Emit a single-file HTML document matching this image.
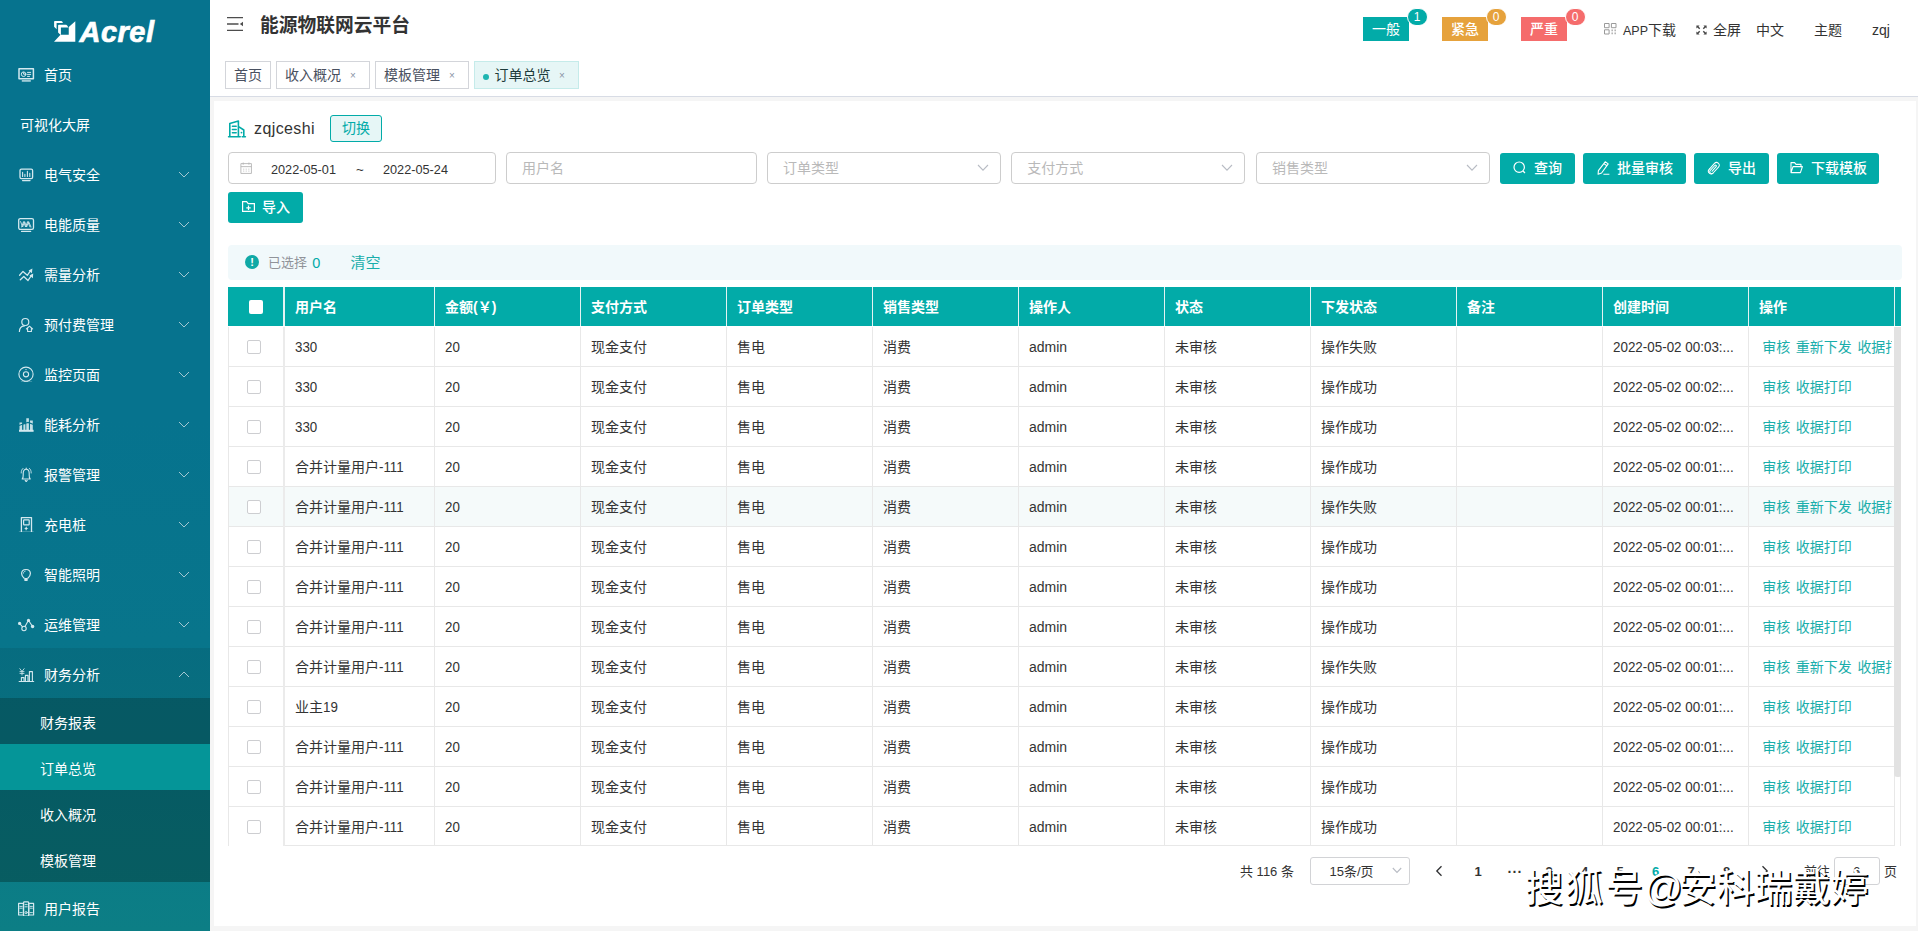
<!DOCTYPE html>
<html lang="zh-CN">
<head>
<meta charset="utf-8">
<title>能源物联网云平台</title>
<style>
*{box-sizing:border-box;margin:0;padding:0}
html,body{width:1918px;height:931px;overflow:hidden}
body{background:#f5f5f5;font-family:"Liberation Sans","Noto Sans CJK SC",sans-serif;font-size:14px;color:#333;position:relative}
i{font-style:normal}
a{text-decoration:none}
.abs{position:absolute}
/* ---------- sidebar ---------- */
#side{position:absolute;left:0;top:0;width:210px;height:931px;overflow:hidden;
 background:linear-gradient(to bottom,#06738e 0,#06738e 45%,#08758b 69%,#0c7e85 100%);color:#fff}
#side .m{position:absolute;left:0;width:210px;height:50px;line-height:50px;font-size:14px;color:#fff;white-space:nowrap}
#side .m span{position:absolute;left:44px;top:2px}
#side .m svg.ic{position:absolute;left:17px;top:16px;width:18px;height:18px}
#side .m svg.ar{position:absolute;left:178px;top:23px;width:12px;height:7px}
#side .s{position:absolute;left:0;width:210px;height:46px;line-height:46px;font-size:14px;color:#fff}
#side .s span{position:absolute;left:40px;top:2px}
#side .sub{position:absolute;left:0;top:698px;width:210px;height:184px;background:rgba(0,21,14,.3)}
#side .open{background:rgba(0,0,0,.075)}
#side .act{background:#059598}
#logo{position:absolute;left:0;top:0;width:210px;height:50px}
#logo em{position:absolute;left:79.500px;top:11.500px;font:italic bold 29px/40px "Liberation Sans",sans-serif;color:#fff;-webkit-text-stroke:.7px #fff;letter-spacing:.500px}
/* ---------- header ---------- */
#head{position:absolute;left:210px;top:0;width:1708px;height:97px;background:#fff;border-bottom:1px solid #d8dce5}
#title{position:absolute;left:50px;top:11px;font-size:18.75px;font-weight:bold;line-height:30px;color:#333;white-space:nowrap}
.tab{position:absolute;top:61px;height:28px;border:1px solid #d3d5da;background:#fff;font-size:14px;line-height:26px;color:#495060;white-space:nowrap}
.tab span{position:absolute;top:0}
.tab .x{font-size:10px;color:#8a93a5;top:.5px}
.tab.on{background:#e6f6f6;border-color:#c5ebea;color:#1d3b3b}
.tag{position:absolute;top:17px;height:24px;width:46px;color:#fff;font-size:14px;line-height:24px;text-align:center;font-weight:400}
.bdg{position:absolute;top:7.500px;width:21px;height:18.500px;border-radius:10px;border:1px solid #fff;color:#fff;font-size:12px;line-height:16px;text-align:center}
.hr{position:absolute;top:19px;line-height:22px;font-size:14px;color:#333;white-space:nowrap}
/* ---------- content ---------- */
#card{position:absolute;left:214px;top:100.5px;width:1701.5px;height:825px;background:#fff}
.inp{position:absolute;top:152px;height:32px;border:1px solid #cdcdcd;border-radius:4px;background:#fff;font-size:14px;line-height:30px;color:#b9b9b9;white-space:nowrap}
.inp span{position:absolute;left:15px;top:0}
.inp svg.dn{position:absolute;right:11px;top:11px;width:12px;height:8px}
.btn{position:absolute;top:153px;height:31px;border-radius:3px;background:#02aba8;color:#fff;font-size:14px;line-height:31px;font-weight:500;white-space:nowrap}
.btn span{position:absolute;top:0}
.btn svg{position:absolute;top:8px;width:13px;height:13px}
#alert{position:absolute;left:228px;top:245px;width:1674px;height:35px;background:#f1f9fb;border-radius:4px;font-size:13px;line-height:35px;color:#909399}
/* table */
#th{position:absolute;left:228px;top:286.700px;width:1673px;height:39.200px;background:#02aba8;color:#fff;font-weight:bold;font-size:14px;line-height:39px}
#th span{position:absolute;top:1px;white-space:nowrap}
#th u{position:absolute;top:0;width:1px;height:39px;background:#e4f3f3;text-decoration:none}
#tb{position:absolute;left:228px;top:326.700px;width:1673px;height:519.400px;background:#fff;overflow:hidden}
#tb .r{position:absolute;left:0;width:1666px;height:40px;border-bottom:1px solid #e8e8e8;line-height:39px;font-size:14px;color:#333}
#tb .r.hv{background:#f5fafa}
#tb .c{position:absolute;top:1px;height:38px;white-space:nowrap;overflow:hidden}
#tb .c i{display:inline-block;font-size:14.200px;transform:scaleX(.94);transform-origin:0 50%}
#tb .ck{position:absolute;left:19.200px;top:13.500px;width:13.800px;height:13.800px;border:1px solid #cdced1;border-radius:2px;background:#fff}
#tb .v{position:absolute;top:0;width:1px;height:520px;background:#e8e8e8}
.c1{left:67px;width:135px}.c2{left:217px}.c3{left:363px}.c4{left:509px}.c5{left:655px}.c6{left:801px}.c7{left:947px}.c8{left:1093px}
.c10{left:1385px;width:126px}
#tb .c10 i{transform:scaleX(.945)}
.c11{left:1531.400px;width:132.600px;color:#1aaeab}
.c11 a{display:inline-block;padding:0 2.800px;color:#1aaeab}
/* pagination */
.pg{position:absolute;top:858px;line-height:28px;font-size:13px;color:#333;white-space:nowrap}
.pg.b{font-weight:bold}
/* watermark */
#wm{position:absolute;left:1525px;top:860px;font-size:38px;line-height:56px;color:#fff;white-space:nowrap;text-shadow:1.5px 1.5px 0 #000;letter-spacing:0}
</style>
</head>
<body>
<div id="side">
<div id="logo"><svg class="abs" style="left:53px;top:20px" width="24" height="23" viewBox="53 20 24 23"><path d="M54.100 21.700Q54.100 20.900 54.900 20.900H61.400Q62.700 21.300 62.900 23H56.600V29.300L54.100 26.700z M58.100 25.500Q58.100 24.700 58.900 24.700H66.200Q67.600 25.200 68.300 27.500H60.900V35.300L58.100 32.500z M75.300 21.250V41.700H54L60.500 34.700H68.750V27z" fill="#fff"/></svg><em>Acrel</em></div>
<div class="m" style="top:48px"><svg class="ic" viewBox="0 0 18 18"><rect x="2" y="4.8" width="14.4" height="10" fill="none" stroke="#d4e9ef" stroke-width="1.5" stroke-linecap="round" stroke-linejoin="round" stroke-linejoin="miter"/><rect x="4.8" y="16" width="9" height="1.8" fill="#d4e9ef" opacity=".75"/><circle cx="6.6" cy="10.2" r="2.3" fill="none" stroke="#d4e9ef" stroke-width="1" stroke-linecap="round" stroke-linejoin="round"/><path d="M6.6 8.6v1.6h1.6M10.5 8.4h3.2M10.5 10.4h3.2M10.5 12.4h2" fill="none" stroke="#d4e9ef" stroke-width="1" stroke-linecap="round" stroke-linejoin="round"/></svg><span>首页</span></div>
<div class="m" style="top:98px"><span style="left:20px">可视化大屏</span></div>
<div class="m" style="top:148px"><svg class="ic" viewBox="0 0 18 18"><rect x="3" y="5.2" width="12.6" height="9.4" rx="1.4" fill="none" stroke="#d4e9ef" stroke-width="1.3" stroke-linecap="round" stroke-linejoin="round"/><path d="M5.6 12.4v-4M7.9 12.4v-2.2M10.4 12.4v-5M12.8 12.4v-3.2" fill="none" stroke="#d4e9ef" stroke-width="1.1" stroke-linecap="round" stroke-linejoin="round"/><path d="M5.5 16.6h7.6" fill="none" stroke="#d4e9ef" stroke-width="1.1" stroke-linecap="round" stroke-linejoin="round"/></svg><span>电气安全</span><svg class="ar" viewBox="0 0 12 7"><path d="M1 1L6 6L11 1" fill="none" stroke="#a3c8d3" stroke-width="1"/></svg></div>
<div class="m" style="top:198px"><svg class="ic" viewBox="0 0 18 18"><rect x="1.7" y="4.6" width="14.8" height="10.8" rx="1.6" fill="none" stroke="#d4e9ef" stroke-width="1.3" stroke-linecap="round" stroke-linejoin="round"/><path d="M3.6 7.6 L5.6 13 L7.6 7.6 L9.6 13 L11.6 7.6 L14 13 M4.6 13 L6.6 7.6 L8.6 13 L10.6 7.6 L13 13" fill="none" stroke="#d4e9ef" stroke-width="0.9" stroke-linecap="round" stroke-linejoin="round"/><path d="M4.5 17.4h9.2" fill="none" stroke="#d4e9ef" stroke-width="1.1" stroke-linecap="round" stroke-linejoin="round"/></svg><span>电能质量</span><svg class="ar" viewBox="0 0 12 7"><path d="M1 1L6 6L11 1" fill="none" stroke="#a3c8d3" stroke-width="1"/></svg></div>
<div class="m" style="top:248px"><svg class="ic" viewBox="0 0 18 18"><path d="M2.6 11.2 L6 7.4 L10.3 11.3 L13.6 6.6 M3.3 15.7 L6.8 12.5 L11 16.5 L14.5 11.4" fill="none" stroke="#d4e9ef" stroke-width="1.3" stroke-linecap="round" stroke-linejoin="round"/><path d="M15.4 4.6 L14.9 9.2 L11.6 6.4Z M16.2 9.6 L15.9 14.2 L12.5 11.4Z" fill="#d4e9ef"/></svg><span>需量分析</span><svg class="ar" viewBox="0 0 12 7"><path d="M1 1L6 6L11 1" fill="none" stroke="#a3c8d3" stroke-width="1"/></svg></div>
<div class="m" style="top:298px"><svg class="ic" viewBox="0 0 18 18"><circle cx="8.3" cy="8" r="3.5" fill="none" stroke="#d4e9ef" stroke-width="1.2" stroke-linecap="round" stroke-linejoin="round"/><path d="M2.4 17.8 C2.4 14.6 4.4 12.2 7.4 11.9" fill="none" stroke="#d4e9ef" stroke-width="1.2" stroke-linecap="round" stroke-linejoin="round"/><path d="M9.4 15 L12.5 12.2 L15.6 15 M10.6 14.6 V17.6 H14.4 V14.6" fill="none" stroke="#d4e9ef" stroke-width="1.1" stroke-linecap="round" stroke-linejoin="round"/></svg><span>预付费管理</span><svg class="ar" viewBox="0 0 12 7"><path d="M1 1L6 6L11 1" fill="none" stroke="#a3c8d3" stroke-width="1"/></svg></div>
<div class="m" style="top:348px"><svg class="ic" viewBox="0 0 18 18"><circle cx="9" cy="10.2" r="7.1" fill="none" stroke="#d4e9ef" stroke-width="1.1" stroke-linecap="round" stroke-linejoin="round"/><circle cx="9" cy="10.3" r="2.6" fill="none" stroke="#d4e9ef" stroke-width="1.1" stroke-linecap="round" stroke-linejoin="round"/><circle cx="9" cy="5.6" r=".7" fill="#d4e9ef"/><path d="M4.2 18.4h10.6" fill="none" stroke="#d4e9ef" stroke-width="1.1" stroke-linecap="round" stroke-linejoin="round"/><path d="M7 17.4h4v1H7z" fill="#d4e9ef"/></svg><span>监控页面</span><svg class="ar" viewBox="0 0 12 7"><path d="M1 1L6 6L11 1" fill="none" stroke="#a3c8d3" stroke-width="1"/></svg></div>
<div class="m" style="top:398px"><svg class="ic" viewBox="0 0 18 18"><path d="M2.5 16 V8.5 h2.6 V16 M6.4 16 V10.2 h2 V16 M9.3 16 V4.2 h2.6 V16 M13 16 V6.6 h2.8 V16" fill="#d4e9ef" opacity=".92"/><rect x="2" y="15.8" width="14.6" height="2" fill="#d4e9ef"/><path d="M2 11.4 L7.4 9.4 L11 8.4 L16.6 10.4" fill="none" stroke="#07748d" stroke-width="1.1"/></svg><span>能耗分析</span><svg class="ar" viewBox="0 0 12 7"><path d="M1 1L6 6L11 1" fill="none" stroke="#a3c8d3" stroke-width="1"/></svg></div>
<div class="m" style="top:448px"><svg class="ic" viewBox="0 0 18 18"><path d="M5.2 15 C6.6 13.6 6.2 12 6.2 9.4 C6.2 6.6 7.4 5.2 9.2 5.2 C11 5.2 12.2 6.6 12.2 9.4 C12.2 12 11.8 13.6 13.2 15 Z" fill="none" stroke="#d4e9ef" stroke-width="1.1" stroke-linecap="round" stroke-linejoin="round"/><path d="M8.2 16.4 L9.2 17.6 L10.2 16.4 M9.2 4 V5" fill="none" stroke="#d4e9ef" stroke-width="1.1" stroke-linecap="round" stroke-linejoin="round"/><path d="M4.2 9 C4.2 6.8 4.8 5.4 6 4.4 M14.2 9 C14.2 6.8 13.6 5.4 12.4 4.4" fill="none" stroke="#d4e9ef" stroke-width="0.9" stroke-linecap="round" stroke-linejoin="round"/></svg><span>报警管理</span><svg class="ar" viewBox="0 0 12 7"><path d="M1 1L6 6L11 1" fill="none" stroke="#a3c8d3" stroke-width="1"/></svg></div>
<div class="m" style="top:498px"><svg class="ic" viewBox="0 0 18 18"><path d="M4.4 18 V3.6 H14.5 V18" fill="none" stroke="#d4e9ef" stroke-width="1.3" stroke-linecap="round" stroke-linejoin="round" stroke-linejoin="miter"/><path d="M2.2 18.4 H16.4" fill="none" stroke="#d4e9ef" stroke-width="1.3" stroke-linecap="round" stroke-linejoin="round"/><rect x="6.6" y="5.8" width="5.6" height="5" rx=".6" fill="none" stroke="#d4e9ef" stroke-width="1.2" stroke-linecap="round" stroke-linejoin="round"/><path d="M9.2 12.2 L10 13.9 L11.4 14.4 L10 15 L9 16.8 L8.4 15 L7 14.4 L8.4 13.9Z" fill="#d4e9ef"/></svg><span>充电桩</span><svg class="ar" viewBox="0 0 12 7"><path d="M1 1L6 6L11 1" fill="none" stroke="#a3c8d3" stroke-width="1"/></svg></div>
<div class="m" style="top:548px"><svg class="ic" viewBox="0 0 18 18"><path d="M7 14 C5.4 12.6 4.6 11.4 4.6 9.6 C4.6 7.2 6.5 5.5 9 5.5 C11.5 5.5 13.4 7.2 13.4 9.6 C13.4 11.4 12.6 12.6 11 14" fill="none" stroke="#d4e9ef" stroke-width="1.2" stroke-linecap="round" stroke-linejoin="round"/><path d="M7.3 14 h3.4 v2.2 c0 .6 -.4 .9 -1 .9 h-1.4 c-.6 0 -1 -.3 -1 -.9z" fill="#d4e9ef"/><path d="M6.4 9.2 C6.5 8 7.2 7.3 8.2 7.1" fill="none" stroke="#d4e9ef" stroke-width="0.9" stroke-linecap="round" stroke-linejoin="round"/></svg><span>智能照明</span><svg class="ar" viewBox="0 0 12 7"><path d="M1 1L6 6L11 1" fill="none" stroke="#a3c8d3" stroke-width="1"/></svg></div>
<div class="m" style="top:598px"><svg class="ic" viewBox="0 0 18 18"><path d="M2.5 9.4 L5.6 12.8 M8 12.6 L11.2 6.8 M11.8 6.8 L15.4 12.2" fill="none" stroke="#d4e9ef" stroke-width="1.1" stroke-linecap="round" stroke-linejoin="round"/><circle cx="2.6" cy="9.4" r="1.6" fill="#d4e9ef"/><circle cx="7" cy="14.5" r="2.2" fill="none" stroke="#d4e9ef" stroke-width="1.1" stroke-linecap="round" stroke-linejoin="round"/><circle cx="11.5" cy="6.4" r="1.6" fill="#d4e9ef"/><circle cx="15.6" cy="12.5" r="1.7" fill="#d4e9ef"/></svg><span>运维管理</span><svg class="ar" viewBox="0 0 12 7"><path d="M1 1L6 6L11 1" fill="none" stroke="#a3c8d3" stroke-width="1"/></svg></div>
<div class="m open" style="top:648px"><svg class="ic" viewBox="0 0 18 18"><path d="M2.6 4.4 L5 7.4 L7.4 4.4 M5 7.4 V11.4 M2.6 7.6 H7.4 M2.6 9.4 H7.4" fill="none" stroke="#d4e9ef" stroke-width="1" opacity=".85"/><path d="M4.4 17.4 V13.6 H7 V17.4 M8.4 17.4 V11.4 H11 V17.4 M12.4 17.4 V7.6 H15.4 V17.4" fill="none" stroke="#d4e9ef" stroke-width="1.1" stroke-linecap="round" stroke-linejoin="round" stroke-linejoin="miter"/><path d="M2.2 17.6 H16.6" fill="none" stroke="#d4e9ef" stroke-width="1.2" stroke-linecap="round" stroke-linejoin="round"/></svg><span>财务分析</span><svg class="ar" viewBox="0 0 12 7"><path d="M1 6L6 1L11 6" fill="none" stroke="#a3c8d3" stroke-width="1"/></svg></div>
<div class="sub"></div>
<div class="s" style="top:698px"><span>财务报表</span></div>
<div class="s act" style="top:744px"><span>订单总览</span></div>
<div class="s" style="top:790px"><span>收入概况</span></div>
<div class="s" style="top:836px"><span>模板管理</span></div>
<div class="m" style="top:882px"><svg class="ic" viewBox="0 0 18 18"><rect x="1.6" y="5.4" width="4.8" height="11.6" fill="none" stroke="#d4e9ef" stroke-width="1.2" stroke-linecap="round" stroke-linejoin="round"/><rect x="6.6" y="3.8" width="5" height="14.4" rx=".8" fill="none" stroke="#d4e9ef" stroke-width="1.2" stroke-linecap="round" stroke-linejoin="round"/><rect x="11.8" y="5.4" width="4.8" height="11.6" fill="none" stroke="#d4e9ef" stroke-width="1.2" stroke-linecap="round" stroke-linejoin="round"/><path d="M8 6.6h2.2M8 8.8h2.2M2.8 8.4h2.4M2.8 10.2h2.4M13 8.4h2.4M13 10.2h2.4M2.8 14.6h2.4M13 14.6h2.4" fill="none" stroke="#d4e9ef" stroke-width="0.9" stroke-linecap="round" stroke-linejoin="round"/><circle cx="9.1" cy="14.6" r="1.1" fill="none" stroke="#d4e9ef" stroke-width="0.9" stroke-linecap="round" stroke-linejoin="round"/></svg><span>用户报告</span></div>
</div>
<div id="head">
<svg class="abs" style="left:16px;top:16px" width="18" height="16" viewBox="0 0 18 16"><path d="M1 1.600h16M1 8h11.500M1 14.400h16" stroke="#4d4d4d" stroke-width="1.300" fill="none"/><path d="M17 5.800v4.400L13.800 8z" fill="#4d4d4d"/></svg>
<div id="title">能源物联网云平台</div>
<div class="tab" style="left:15px;width:46px"><span style="left:8px">首页</span></div>
<div class="tab" style="left:66px;width:94px"><span style="left:8px">收入概况</span><span class="x" style="left:73px">×</span></div>
<div class="tab" style="left:165px;width:94px"><span style="left:8px">模板管理</span><span class="x" style="left:73px">×</span></div>
<div class="tab on" style="left:264px;width:105px"><b style="position:absolute;left:8px;top:12px;width:6px;height:6px;border-radius:3px;background:#1fb5b1"></b><span style="left:19.500px">订单总览</span><span class="x" style="left:84px">×</span></div>
<div class="tag" style="left:1153px;background:#02aba8">一般</div><div class="bdg" style="left:1196.500px;background:#02aba8">1</div>
<div class="tag" style="left:1232px;background:#e6a23c;font-weight:500">紧急</div><div class="bdg" style="left:1275.500px;background:#e6a23c">0</div>
<div class="tag" style="left:1311px;background:#f56c6c;font-weight:500">严重</div><div class="bdg" style="left:1354.500px;background:#f56c6c">0</div>
<svg class="abs" style="left:1394px;top:23px" width="13" height="12" viewBox="0 0 13 12"><path d="M.5.5h4.6v4.2H.5zM7.4.5H12v4.2H7.4zM.5 6.8h4.6V11H.5z" fill="none" stroke="#9a9a9a" stroke-width="1"/><path d="M7.4 6.6h1.6v1.6H7.4zM10.4 6.6H12v1.6h-1.6zM7.4 9.6h1.6v1.6H7.4zM10.4 9.6H12v1.6h-1.6z" fill="#b5b5b5"/></svg>
<div class="hr" style="left:1413px"><i style="font-size:12.500px">APP</i>下载</div>
<svg class="abs" style="left:1486px;top:25px" width="11" height="10" viewBox="0 0 11 10"><path d="M.4.4h3.2L2.5 1.5 4.2 3.2 3.2 4.2 1.5 2.5.4 3.6zM10.6.4v3.2L9.5 2.5 7.8 4.2 6.8 3.2 8.5 1.5 7.4.4zM.4 9.6V6.4l1.1 1.1 1.7-1.7 1 1-1.7 1.7 1.1 1.1zM10.6 9.6H7.4l1.1-1.1-1.7-1.7 1-1 1.7 1.7 1.1-1.1z" fill="#444"/></svg>
<div class="hr" style="left:1503px">全屏</div>
<div class="hr" style="left:1546px">中文</div>
<div class="hr" style="left:1604px">主题</div>
<div class="hr" style="left:1662px">zqj</div>
</div>

<div id="card"></div>
<svg class="abs" style="left:227px;top:119px" width="20" height="20" viewBox="0 0 20 20"><path d="M2.8 17.6V4.6L11.4 2v15.6M11.6 7.6l5.2 3.4v6.6M1.6 17.8h11.6M15.2 17.8h3.2" fill="none" stroke="#02aba8" stroke-width="1.6" stroke-linejoin="round" stroke-linecap="round"/><path d="M5.4 7.2h3.8M5.4 10.5h3.8M5.4 13.8h3.8" stroke="#02aba8" stroke-width="1.5" stroke-linecap="round"/><circle cx="14.5" cy="13.6" r=".9" fill="#02aba8"/></svg>
<div class="abs" style="left:254px;top:118px;font-size:16px;line-height:22px;letter-spacing:.400px;color:#333">zqjceshi</div>
<div class="abs" style="left:330px;top:115px;width:52px;height:27px;border:1px solid #02aba8;border-radius:3px;background:#e6f6f6;color:#02aba8;font-size:14px;line-height:25px;text-align:center">切换</div>

<div class="inp" style="left:228px;width:268px;color:#333;font-size:13.300px">
<svg class="abs" style="left:10.500px;top:8.500px" width="12.500" height="12.500" viewBox="0 0 14 14"><path d="M1 1.8h11.8v11H1zM1 5.2h11.8M3.6.6v2.4M10 .6v2.4" fill="none" stroke="#b4b4b4" stroke-width="1"/><path d="M3.4 8h1.4M6.3 8h1.4M9.2 8h1.4M3.4 10.2h1.4M6.3 10.2h1.4M9.2 10.2h1.4" stroke="#c8c8c8" stroke-width="1"/></svg>
<span style="left:41.500px;top:2px;transform:scaleX(.955);transform-origin:0 50%">2022-05-01</span><span style="left:127px;top:2px">~</span><span style="left:153.500px;top:2px;transform:scaleX(.955);transform-origin:0 50%">2022-05-24</span></div>
<div class="inp" style="left:506px;width:250.5px"><span>用户名</span></div>
<div class="inp" style="left:767px;width:233.7px"><span>订单类型</span><svg class="dn" viewBox="0 0 12 8"><path d="M1 1l5 5.2L11 1" fill="none" stroke="#b8bcc4" stroke-width="1.1"/></svg></div>
<div class="inp" style="left:1011.3px;width:234px"><span>支付方式</span><svg class="dn" viewBox="0 0 12 8"><path d="M1 1l5 5.2L11 1" fill="none" stroke="#b8bcc4" stroke-width="1.1"/></svg></div>
<div class="inp" style="left:1256px;width:233.7px"><span>销售类型</span><svg class="dn" viewBox="0 0 12 8"><path d="M1 1l5 5.2L11 1" fill="none" stroke="#b8bcc4" stroke-width="1.1"/></svg></div>

<div class="btn" style="left:1500px;width:75px"><svg style="left:13px" viewBox="0 0 13 13"><circle cx="6.2" cy="6.2" r="5.2" fill="none" stroke="#fff" stroke-width="1.2"/><path d="M10 10l2 2" stroke="#fff" stroke-width="1.2"/></svg><span style="left:34px">查询</span></div>
<div class="btn" style="left:1583px;width:103px"><svg style="left:13px;top:8px;width:14px;height:14px" viewBox="0 0 14 14"><path d="M9.200 .800l3 2.100-6.600 9.100-3.500 1.300.300-3.700zM7.900 2.600l3 2.100M7.400 13.300h6" fill="none" stroke="#fff" stroke-width="1.100" stroke-linejoin="round"/></svg><span style="left:34px">批量审核</span></div>
<div class="btn" style="left:1694px;width:75px"><svg style="left:13px;top:7.500px;width:14px;height:14px" viewBox="0 0 14 14"><g transform="rotate(42 7 7)"><path d="M4.300 10.600V3.300a2.700 2.700 0 0 1 5.400 0v8a1.900 1.900 0 0 1-3.800 0V4.600a.9.900 0 0 1 1.800 0v6.200" fill="none" stroke="#fff" stroke-width="1" stroke-linecap="round"/><path d="M4.300 10.600v.7a2.700 2.700 0 0 0 5.400 0" fill="none" stroke="#fff" stroke-width="1" stroke-linecap="round"/></g></svg><span style="left:34px">导出</span></div>
<div class="btn" style="left:1777px;width:102px"><svg style="left:13px" viewBox="0 0 13 13"><path d="M1 11.600V1.600h3.600l1.400 1.800h5v2M1 11.600l2-6h9.400l-2 6z" fill="none" stroke="#fff" stroke-width="1.100" stroke-linejoin="round"/></svg><span style="left:34px">下载模板</span></div>
<div class="btn" style="left:228px;top:192px;width:75px"><svg style="left:13.500px;top:8.500px" viewBox="0 0 13 13"><path d="M.6 10.400V.600h4l1.600 2h6.200v7.800zM6.500 4.600v4.400M4.300 6.800h4.400" fill="none" stroke="#fff" stroke-width="1.200"/></svg><span style="left:34px">导入</span></div>

<div id="alert"><b class="abs" style="left:17px;top:10px;width:14px;height:14px;border-radius:7px;background:#10a9a6;color:#fff;font-size:11px;line-height:14px;text-align:center;font-weight:bold">!</b><span class="abs" style="left:40px;top:0">已选择 <i style="color:#02aba8;font-size:14.500px;position:relative;top:1px;left:1.500px">0</i></span><span class="abs" style="left:122.500px;top:0;color:#1aaeab;font-size:15px">清空</span></div>

<div id="th"><b class="abs" style="left:21px;top:13px;width:14px;height:14px;border-radius:2px;background:#fff"></b>
<span style="left:67px">用户名</span><span style="left:217px">金额(￥)</span><span style="left:363px">支付方式</span><span style="left:509px">订单类型</span><span style="left:655px">销售类型</span><span style="left:801px">操作人</span><span style="left:947px">状态</span><span style="left:1093px">下发状态</span><span style="left:1239px">备注</span><span style="left:1385px">创建时间</span><span style="left:1531px">操作</span>
<u style="left:55px;width:1.500px"></u><u style="left:206px"></u><u style="left:352px"></u><u style="left:498px"></u><u style="left:644px"></u><u style="left:790px"></u><u style="left:936px"></u><u style="left:1082px"></u><u style="left:1228px"></u><u style="left:1374px"></u><u style="left:1520px"></u><u style="left:1666px"></u>
</div>
<div id="tb">
<div class="r" style="top:0px"><b class="ck"></b><span class="c c1"><i>330</i></span><span class="c c2"><i>20</i></span><span class="c c3">现金支付</span><span class="c c4">售电</span><span class="c c5">消费</span><span class="c c6">admin</span><span class="c c7">未审核</span><span class="c c8">操作失败</span><span class="c c10"><i>2022-05-02 00:03:...</i></span><span class="c c11"><a>审核</a><a>重新下发</a><a>收据打印</a></span></div>
<div class="r" style="top:40px"><b class="ck"></b><span class="c c1"><i>330</i></span><span class="c c2"><i>20</i></span><span class="c c3">现金支付</span><span class="c c4">售电</span><span class="c c5">消费</span><span class="c c6">admin</span><span class="c c7">未审核</span><span class="c c8">操作成功</span><span class="c c10"><i>2022-05-02 00:02:...</i></span><span class="c c11"><a>审核</a><a>收据打印</a></span></div>
<div class="r" style="top:80px"><b class="ck"></b><span class="c c1"><i>330</i></span><span class="c c2"><i>20</i></span><span class="c c3">现金支付</span><span class="c c4">售电</span><span class="c c5">消费</span><span class="c c6">admin</span><span class="c c7">未审核</span><span class="c c8">操作成功</span><span class="c c10"><i>2022-05-02 00:02:...</i></span><span class="c c11"><a>审核</a><a>收据打印</a></span></div>
<div class="r" style="top:120px"><b class="ck"></b><span class="c c1">合并计量用户<i>-111</i></span><span class="c c2"><i>20</i></span><span class="c c3">现金支付</span><span class="c c4">售电</span><span class="c c5">消费</span><span class="c c6">admin</span><span class="c c7">未审核</span><span class="c c8">操作成功</span><span class="c c10"><i>2022-05-02 00:01:...</i></span><span class="c c11"><a>审核</a><a>收据打印</a></span></div>
<div class="r hv" style="top:160px"><b class="ck"></b><span class="c c1">合并计量用户<i>-111</i></span><span class="c c2"><i>20</i></span><span class="c c3">现金支付</span><span class="c c4">售电</span><span class="c c5">消费</span><span class="c c6">admin</span><span class="c c7">未审核</span><span class="c c8">操作失败</span><span class="c c10"><i>2022-05-02 00:01:...</i></span><span class="c c11"><a>审核</a><a>重新下发</a><a>收据打印</a></span></div>
<div class="r" style="top:200px"><b class="ck"></b><span class="c c1">合并计量用户<i>-111</i></span><span class="c c2"><i>20</i></span><span class="c c3">现金支付</span><span class="c c4">售电</span><span class="c c5">消费</span><span class="c c6">admin</span><span class="c c7">未审核</span><span class="c c8">操作成功</span><span class="c c10"><i>2022-05-02 00:01:...</i></span><span class="c c11"><a>审核</a><a>收据打印</a></span></div>
<div class="r" style="top:240px"><b class="ck"></b><span class="c c1">合并计量用户<i>-111</i></span><span class="c c2"><i>20</i></span><span class="c c3">现金支付</span><span class="c c4">售电</span><span class="c c5">消费</span><span class="c c6">admin</span><span class="c c7">未审核</span><span class="c c8">操作成功</span><span class="c c10"><i>2022-05-02 00:01:...</i></span><span class="c c11"><a>审核</a><a>收据打印</a></span></div>
<div class="r" style="top:280px"><b class="ck"></b><span class="c c1">合并计量用户<i>-111</i></span><span class="c c2"><i>20</i></span><span class="c c3">现金支付</span><span class="c c4">售电</span><span class="c c5">消费</span><span class="c c6">admin</span><span class="c c7">未审核</span><span class="c c8">操作成功</span><span class="c c10"><i>2022-05-02 00:01:...</i></span><span class="c c11"><a>审核</a><a>收据打印</a></span></div>
<div class="r" style="top:320px"><b class="ck"></b><span class="c c1">合并计量用户<i>-111</i></span><span class="c c2"><i>20</i></span><span class="c c3">现金支付</span><span class="c c4">售电</span><span class="c c5">消费</span><span class="c c6">admin</span><span class="c c7">未审核</span><span class="c c8">操作失败</span><span class="c c10"><i>2022-05-02 00:01:...</i></span><span class="c c11"><a>审核</a><a>重新下发</a><a>收据打印</a></span></div>
<div class="r" style="top:360px"><b class="ck"></b><span class="c c1">业主<i>19</i></span><span class="c c2"><i>20</i></span><span class="c c3">现金支付</span><span class="c c4">售电</span><span class="c c5">消费</span><span class="c c6">admin</span><span class="c c7">未审核</span><span class="c c8">操作成功</span><span class="c c10"><i>2022-05-02 00:01:...</i></span><span class="c c11"><a>审核</a><a>收据打印</a></span></div>
<div class="r" style="top:400px"><b class="ck"></b><span class="c c1">合并计量用户<i>-111</i></span><span class="c c2"><i>20</i></span><span class="c c3">现金支付</span><span class="c c4">售电</span><span class="c c5">消费</span><span class="c c6">admin</span><span class="c c7">未审核</span><span class="c c8">操作成功</span><span class="c c10"><i>2022-05-02 00:01:...</i></span><span class="c c11"><a>审核</a><a>收据打印</a></span></div>
<div class="r" style="top:440px"><b class="ck"></b><span class="c c1">合并计量用户<i>-111</i></span><span class="c c2"><i>20</i></span><span class="c c3">现金支付</span><span class="c c4">售电</span><span class="c c5">消费</span><span class="c c6">admin</span><span class="c c7">未审核</span><span class="c c8">操作成功</span><span class="c c10"><i>2022-05-02 00:01:...</i></span><span class="c c11"><a>审核</a><a>收据打印</a></span></div>
<div class="r" style="top:480px;height:39px"><b class="ck"></b><span class="c c1">合并计量用户<i>-111</i></span><span class="c c2"><i>20</i></span><span class="c c3">现金支付</span><span class="c c4">售电</span><span class="c c5">消费</span><span class="c c6">admin</span><span class="c c7">未审核</span><span class="c c8">操作成功</span><span class="c c10"><i>2022-05-02 00:01:...</i></span><span class="c c11"><a>审核</a><a>收据打印</a></span></div>
<b class="v" style="left:0"></b><b class="v" style="left:55px;width:2px;background:#ebebeb"></b><b class="v" style="left:206px"></b><b class="v" style="left:352px"></b><b class="v" style="left:498px"></b><b class="v" style="left:644px"></b><b class="v" style="left:790px"></b><b class="v" style="left:936px"></b><b class="v" style="left:1082px"></b><b class="v" style="left:1228px"></b><b class="v" style="left:1374px"></b><b class="v" style="left:1520px"></b><b class="v" style="left:1666px"></b><b class="v" style="left:1672px"></b>
<b class="abs" style="left:1px;top:518px;width:54px;height:2px;background:#fff"></b><b class="abs" style="left:1666.200px;top:0;width:7.600px;height:450.500px;border-radius:1px 1px 3.500px 3.500px;background:#e2e2e2"></b>
</div>

<div class="pg" style="left:1240px">共 116 条</div>
<div class="abs" style="left:1310px;top:857px;width:100px;height:28px;border:1px solid #d2d3d6;border-radius:3px;background:#fff"></div>
<div class="pg" style="left:1329.500px">15条/页</div>
<svg class="abs" style="left:1392px;top:867px" width="10" height="7" viewBox="0 0 10 7"><path d="M.8 1l4.200 4.400L9.200 1" fill="none" stroke="#b8bcc4" stroke-width="1.100"/></svg>
<svg class="abs" style="left:1435px;top:865px" width="8" height="12" viewBox="0 0 8 12"><path d="M6.500 1.200L1.800 6l4.700 4.800" fill="none" stroke="#303133" stroke-width="1.300"/></svg>
<div class="pg b" style="left:1474.500px">1</div>
<div class="pg b" style="left:1507.500px;font-size:14px;letter-spacing:.3px">···</div>
<div class="pg b" style="left:1545.500px">3</div><div class="pg b" style="left:1581px">4</div><div class="pg b" style="left:1616.500px">5</div>
<div class="pg b" style="left:1652px;color:#02aba8">6</div><div class="pg b" style="left:1687.500px">7</div><div class="pg b" style="left:1723px">8</div>
<svg class="abs" style="left:1761px;top:865px" width="8" height="12" viewBox="0 0 8 12"><path d="M1.500 1.200L6.200 6l-4.700 4.800" fill="none" stroke="#303133" stroke-width="1.300"/></svg>
<div class="pg" style="left:1804px">前往</div>
<div class="abs" style="left:1834px;top:857px;width:45.500px;height:28px;border:1px solid #d2d3d6;border-radius:3px;background:#fff"></div>
<div class="pg" style="left:1853px">6</div>
<div class="pg" style="left:1884px">页</div>
<div id="wm"><span style="letter-spacing:2px">搜狐号</span><span style="letter-spacing:-4px;margin-left:-1px">@</span>安科瑞戴婷</div>

</body>
</html>
